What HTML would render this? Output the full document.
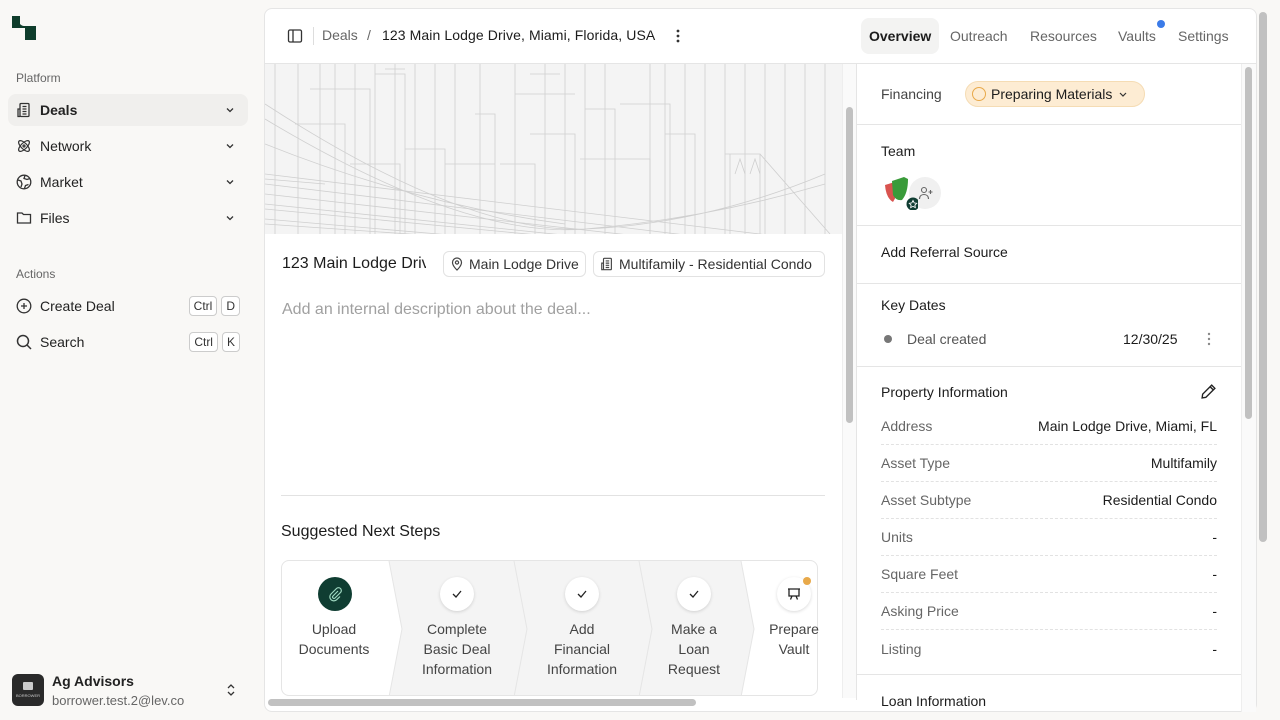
<!DOCTYPE html>
<html><head><meta charset="utf-8"><style>
*{box-sizing:border-box;margin:0;padding:0}
body{width:1280px;height:720px;overflow:hidden;background:#f9f8f6;font-family:"Liberation Sans",sans-serif;color:#1c1c1c;position:relative;font-size:14px}
.a{position:absolute}
.nav{left:8px;width:240px;height:32px;border-radius:8px;display:flex;align-items:center;padding-left:8px;font-size:14px;color:#222}
.nav svg{margin-right:8px}
.chev{position:absolute;right:4px;top:10px}
.sec{left:16px;font-size:12px;color:#666}
.kbd{border:1px solid #ccc;border-radius:4px;font-size:12px;height:20px;line-height:18px;padding:0 4px;background:#fff;color:#333;display:inline-block;margin-left:4px}
.card{left:264px;top:8px;width:993px;height:704px;background:#fff;border:1px solid #e5e5e5;border-radius:8px;overflow:hidden}
.tab{top:18px;height:36px;line-height:36px;font-size:14px;color:#666;padding:0 8px}
.row{left:881px;width:336px;height:37px;border-bottom:1px dashed #e2e2e2;font-size:14px;display:flex;justify-content:space-between;align-items:center}
.row span:first-child{color:#666}
.row span:last-child{color:#1c1c1c}
.hl{left:857px;width:384px;height:1px;background:#e5e5e5}
.st{font-size:14px;color:#444;text-align:center;line-height:20px}
.circ{width:34px;height:34px;border-radius:50%;background:#fff;box-shadow:0 1px 3px rgba(0,0,0,.15);display:flex;align-items:center;justify-content:center}
</style></head><body>
<svg class="a" style="left:12px;top:16px" width="24" height="24" viewBox="0 0 24 24"><path d="M0 0h8v8q2 2 4 2h12v14H13V12H0z" fill="#0f3d2c"/></svg>
<div class="a sec" style="top:71px">Platform</div>
<div class="a nav" style="top:94px;background:#f0efed;font-weight:bold"><svg width="16" height="16" viewBox="0 0 16 16" fill="none" stroke="#333" stroke-width="1.3"><rect x="4" y="1.5" width="9" height="13" rx="1"/><path d="M4 7H2v7.5h2M6.5 4.5h4M6.5 7h4M6.5 9.5h4M6.5 12h4"/></svg>Deals<svg class="chev" width="12" height="12" viewBox="0 0 12 12"><path d="M3 4.5l3 3 3-3" stroke="#333" stroke-width="1.3" fill="none"/></svg></div>
<div class="a nav" style="top:130px"><svg width="16" height="16" viewBox="0 0 16 16" fill="none" stroke="#333" stroke-width="1.2"><ellipse cx="8" cy="8" rx="7" ry="3" transform="rotate(45 8 8)"/><ellipse cx="8" cy="8" rx="7" ry="3" transform="rotate(-45 8 8)"/><circle cx="8" cy="8" r="1"/></svg>Network<svg class="chev" width="12" height="12" viewBox="0 0 12 12"><path d="M3 4.5l3 3 3-3" stroke="#333" stroke-width="1.3" fill="none"/></svg></div>
<div class="a nav" style="top:166px"><svg width="16" height="16" viewBox="0 0 16 16" fill="none" stroke="#333" stroke-width="1.3"><circle cx="8" cy="8" r="6.8"/><path d="M2 6l3 1 1 3-1 3M9 1.5l-1 3 3 1 3-1M8.5 14.5l1-3 3-1"/></svg>Market<svg class="chev" width="12" height="12" viewBox="0 0 12 12"><path d="M3 4.5l3 3 3-3" stroke="#333" stroke-width="1.3" fill="none"/></svg></div>
<div class="a nav" style="top:202px"><svg width="16" height="16" viewBox="0 0 16 16" fill="none" stroke="#333" stroke-width="1.3"><path d="M1.5 3h4.5l1.5 1.5h7v8.5h-13z"/></svg>Files<svg class="chev" width="12" height="12" viewBox="0 0 12 12"><path d="M3 4.5l3 3 3-3" stroke="#333" stroke-width="1.3" fill="none"/></svg></div>
<div class="a sec" style="top:267px">Actions</div>
<div class="a nav" style="top:290px"><svg width="16" height="16" viewBox="0 0 16 16" fill="none" stroke="#333" stroke-width="1.3"><circle cx="8" cy="8" r="6.8"/><path d="M8 5v6M5 8h6"/></svg>Create Deal<div style="position:absolute;right:8px;top:6px;display:flex"><span class="kbd">Ctrl</span><span class="kbd">D</span></div></div>
<div class="a nav" style="top:326px"><svg width="16" height="16" viewBox="0 0 16 16" fill="none" stroke="#333" stroke-width="1.5"><circle cx="7" cy="7" r="5.5"/><path d="M11 11l4 4"/></svg>Search<div style="position:absolute;right:8px;top:6px;display:flex"><span class="kbd">Ctrl</span><span class="kbd">K</span></div></div>
<div class="a" style="left:12px;top:674px;width:32px;height:32px;border-radius:6px;background:#2a2a2a"><div style="margin:8px auto 0;width:10px;height:8px;background:#ccc;border-radius:1px"></div><div style="font-size:4px;color:#ccc;text-align:center;margin-top:3px">BORROWER</div></div>
<div class="a" style="left:52px;top:673px;font-size:14px;font-weight:bold;color:#222">Ag Advisors</div>
<div class="a" style="left:52px;top:693px;font-size:13px;color:#666">borrower.test.2@lev.co</div>
<svg class="a" style="left:225px;top:683px" width="12" height="14" viewBox="0 0 12 14"><path d="M3 5l3-3 3 3M3 9l3 3 3-3" stroke="#333" stroke-width="1.3" fill="none"/></svg>

<div class="a card"></div>
<svg class="a" style="left:287px;top:28px" width="16" height="16" viewBox="0 0 16 16" fill="none" stroke="#333" stroke-width="1.3"><rect x="1.5" y="2" width="13" height="12" rx="1.5"/><path d="M6 2v12"/></svg>
<div class="a" style="left:313px;top:27px;width:1px;height:18px;background:#ddd"></div>
<div class="a" style="left:322px;top:27px;font-size:14px;color:#666">Deals</div>
<div class="a" style="left:367px;top:27px;font-size:14px;color:#666">/</div>
<div class="a" style="left:382px;top:27px;font-size:14px;color:#1c1c1c;letter-spacing:0.1px">123 Main Lodge Drive, Miami, Florida, USA</div>
<svg class="a" style="left:670px;top:28px" width="16" height="16"><circle cx="8" cy="3" r="1.4" fill="#333"/><circle cx="8" cy="8" r="1.4" fill="#333"/><circle cx="8" cy="13" r="1.4" fill="#333"/></svg>
<div class="a tab" style="left:861px;background:#f3f3f2;border-radius:8px;color:#1c1c1c;font-weight:bold">Overview</div>
<div class="a tab" style="left:942px">Outreach</div>
<div class="a tab" style="left:1022px">Resources</div>
<div class="a tab" style="left:1110px">Vaults</div>
<div class="a" style="left:1157px;top:20px;width:8px;height:8px;border-radius:50%;background:#3b7be8"></div>
<div class="a tab" style="left:1170px">Settings</div>
<div class="a" style="left:265px;top:63px;width:991px;height:1px;background:#e5e5e5"></div>

<svg class="a" style="left:265px;top:64px" width="577" height="170" viewBox="0 0 577 170">
<rect width="577" height="170" fill="#f4f4f4"/>
<g stroke="#cfcfcf" stroke-width="0.8" fill="none">
<path d="M10 0v170M33 0v170M55 0v170M90 0v170M110 0v170M130 0v170M150 0v170M190 0v170M215 0v170M250 0v170M300 0v170M340 0v170M385 0v170M400 0v170M420 0v170M440 0v170M460 0v170M500 0v170M520 0v170M540 0v170M560 0v170M70 0v170M170 0v170M280 0v170M320 0v170M480 0v170"/>
<path d="M30 60h50v110M45 25h60v145M85 100h50v70M110 10h30v160M140 85h40v85M180 100h50v70M210 50h20v120M235 100h35v70M265 70h45v100M315 95h70v75M320 45h30v125M355 40h50v130M400 70h30v100M250 30h60M265 10h30M120 5h20"/>
<path d="M0 120l577 70M0 130l577 65M0 140l577 60M0 155l577 50M0 110l577 70M0 145l577 55M0 160l577 40"/>
<path d="M0 40q200 130 320 125T560 110M0 55q200 120 320 110T560 120M0 80q150 60 300 80"/>
<path d="M465 170V90h30v80M460 90h35M470 110l5-15 5 15M485 110l5-15 5 15M495 90l70 80M0 115l60 5"/>
</g></svg>
<div class="a" style="left:842px;top:64px;width:14px;height:634px;background:#fafafa;border-left:1px solid #eee"></div>
<div class="a" style="left:846px;top:107px;width:7px;height:316px;border-radius:4px;background:#c1c1c1"></div>
<div class="a" style="left:856px;top:64px;width:1px;height:636px;background:#e5e5e5"></div>

<div class="a" style="left:282px;top:255px;font-size:16px;width:144px;overflow:hidden;white-space:nowrap;color:#1c1c1c">123 Main Lodge Drive</div>
<div class="a" style="left:443px;top:251px;height:26px;border:1px solid #e2e2e2;border-radius:6px;padding:0 6px 0 6px;display:flex;align-items:center;font-size:14px;color:#333"><svg width="14" height="14" viewBox="0 0 14 14" fill="none" stroke="#444" stroke-width="1.2" style="margin-right:5px"><path d="M7 13s4.5-4 4.5-7.5a4.5 4.5 0 0 0-9 0C2.5 9 7 13 7 13z"/><circle cx="7" cy="5.5" r="1.6"/></svg>Main Lodge Drive</div>
<div class="a" style="left:593px;top:251px;height:26px;width:232px;border:1px solid #e2e2e2;border-radius:6px;padding:0 6px 0 6px;display:flex;align-items:center;font-size:14px;color:#333;white-space:nowrap"><svg width="14" height="14" viewBox="0 0 16 16" fill="none" stroke="#444" stroke-width="1.3" style="margin-right:5px"><rect x="4" y="1.5" width="9" height="13" rx="1"/><path d="M4 7H2v7.5h2M6.5 4.5h4M6.5 7h4M6.5 9.5h4M6.5 12h4"/></svg>Multifamily - Residential Condo</div>
<div class="a" style="left:282px;top:301px;font-size:16px;color:#a0a0a0">Add an internal description about the deal...</div>
<div class="a" style="left:281px;top:495px;width:544px;height:1px;background:#e2e2e2"></div>
<div class="a" style="left:281px;top:523px;font-size:16px;color:#1c1c1c">Suggested Next Steps</div>

<div class="a" style="left:281px;top:560px;width:537px;height:136px;border:1px solid #e5e5e5;border-radius:8px;overflow:hidden;background:#fff">
<svg class="a" style="left:0;top:0" width="560" height="136"><polygon points="107,0 459,0 472,68 459,136 107,136 120,68" fill="#f4f4f4"/><g stroke="#e5e5e5" fill="none"><path d="M107,0L120,68L107,136M232,0L245,68L232,136M357,0L370,68L357,136M459,0L472,68L459,136"/></g></svg>
</div>
<div class="a" style="left:318px;top:577px;width:34px;height:34px;border-radius:50%;background:#0f3d32;display:flex;align-items:center;justify-content:center"><svg width="16" height="16" viewBox="0 0 16 16" fill="none" stroke="#9ed8c0" stroke-width="1.2"><path d="M11 5l-5 5a1.4 1.4 0 0 0 2 2l5.5-5.5a2.8 2.8 0 0 0-4-4L4 8a4 4 0 0 0 5.7 5.7L13 10.5"/></svg></div>
<div class="a circ" style="left:440px;top:577px"><svg width="12" height="12"><path d="M2 6l3 3 5-6" stroke="#222" stroke-width="1.3" fill="none"/></svg></div>
<div class="a circ" style="left:565px;top:577px"><svg width="12" height="12"><path d="M2 6l3 3 5-6" stroke="#222" stroke-width="1.3" fill="none"/></svg></div>
<div class="a circ" style="left:677px;top:577px"><svg width="12" height="12"><path d="M2 6l3 3 5-6" stroke="#222" stroke-width="1.3" fill="none"/></svg></div>
<div class="a circ" style="left:777px;top:577px"><svg width="14" height="14" viewBox="0 0 14 14" fill="none" stroke="#222" stroke-width="1.3"><path d="M1 2h12M2 2v7h10V2M5 9l-1.5 3.5M9 9l1.5 3.5"/></svg></div>
<div class="a" style="left:803px;top:577px;width:8px;height:8px;border-radius:50%;background:#e8a94a"></div>
<div class="a st" style="left:284px;top:619px;width:100px">Upload<br>Documents</div>
<div class="a st" style="left:402px;top:619px;width:110px">Complete<br>Basic Deal<br>Information</div>
<div class="a st" style="left:527px;top:619px;width:110px">Add<br>Financial<br>Information</div>
<div class="a st" style="left:644px;top:619px;width:100px">Make a<br>Loan<br>Request</div>
<div class="a st" style="left:760px;top:619px;width:68px">Prepare<br>Vault</div>
<div class="a" style="left:268px;top:699px;width:428px;height:7px;border-radius:4px;background:#c1c1c1"></div>

<div class="a" style="left:881px;top:86px;font-size:14px;color:#444">Financing</div>
<div class="a" style="left:965px;top:81px;height:26px;width:180px;border-radius:13px;background:#fdecd3;border:1px solid #f5dcb4;padding:0 10px 0 6px;display:flex;align-items:center;font-size:14px;color:#1c1c1c;white-space:nowrap"><span style="width:14px;height:14px;border-radius:50%;border:1.5px solid #e8a94a;margin-right:5px;flex:none"></span>Preparing Materials<svg width="10" height="10" style="margin-left:6px"><path d="M2 4l3 3 3-3" stroke="#333" stroke-width="1.2" fill="none"/></svg></div>
<div class="a hl" style="top:124px"></div>
<div class="a" style="left:881px;top:143px">Team</div>
<div class="a" style="left:909px;top:177px;width:32px;height:32px;border-radius:50%;background:#f0f0f0"><svg width="16" height="16" viewBox="0 0 16 16" style="margin:8px 0 0 9px" fill="none" stroke="#666" stroke-width="1.1"><circle cx="6" cy="5" r="2.5"/><path d="M1.5 14c0-3 2-4.5 4.5-4.5s4.5 1.5 4.5 4.5M12.5 5v4M10.5 7h4"/></svg></div>
<svg class="a" style="left:884px;top:176px" width="34" height="34" viewBox="0 0 34 34"><path d="M1 9l10-3 2 13-4 7q-7-4-8-17z" fill="#d9534f"/><path d="M8 5l12-4 4 2q0 14-6 21-6 1-9-5z" fill="#3a9b3a"/><circle cx="29" cy="28" r="6.5" fill="#0f3d32"/><path d="M29 24.5l1.2 2.4 2.5.4-1.8 1.8.4 2.5-2.3-1.2-2.3 1.2.4-2.5-1.8-1.8 2.5-.4z" fill="none" stroke="#fff" stroke-width="0.9"/></svg>
<div class="a hl" style="top:225px"></div>
<div class="a" style="left:881px;top:244px">Add Referral Source</div>
<div class="a hl" style="top:283px"></div>
<div class="a" style="left:881px;top:297px">Key Dates</div>
<div class="a" style="left:884px;top:335px;width:8px;height:8px;border-radius:50%;background:#777"></div>
<div class="a" style="left:907px;top:331px;color:#555">Deal created</div>
<div class="a" style="left:1123px;top:331px">12/30/25</div>
<svg class="a" style="left:1202px;top:331px" width="14" height="16"><circle cx="7" cy="3" r="1.2" fill="#888"/><circle cx="7" cy="8" r="1.2" fill="#888"/><circle cx="7" cy="13" r="1.2" fill="#888"/></svg>
<div class="a hl" style="top:366px"></div>
<div class="a" style="left:881px;top:384px">Property Information</div>
<svg class="a" style="left:1200px;top:383px" width="17" height="17" viewBox="0 0 16 16" fill="none" stroke="#222" stroke-width="1.3"><path d="M11 2l3 3-8.5 8.5L2 14l.5-3.5z M9.5 3.5l3 3"/></svg>
<div class="a row" style="top:408px"><span>Address</span><span>Main Lodge Drive, Miami, FL</span></div>
<div class="a row" style="top:445px"><span>Asset Type</span><span>Multifamily</span></div>
<div class="a row" style="top:482px"><span>Asset Subtype</span><span>Residential Condo</span></div>
<div class="a row" style="top:519px"><span>Units</span><span>-</span></div>
<div class="a row" style="top:556px"><span>Square Feet</span><span>-</span></div>
<div class="a row" style="top:593px"><span>Asking Price</span><span>-</span></div>
<div class="a row" style="top:630px;border-bottom:none"><span>Listing</span><span>-</span></div>
<div class="a hl" style="top:674px"></div>
<div class="a" style="left:881px;top:693px">Loan Information</div>
<div class="a" style="left:1241px;top:64px;width:15px;height:648px;background:#fafafa;border-left:1px solid #eee"></div>
<div class="a" style="left:1245px;top:67px;width:7px;height:352px;border-radius:4px;background:#c1c1c1"></div>
<div class="a" style="left:1259px;top:12px;width:8px;height:530px;border-radius:4px;background:#c1c1c1"></div>
</body></html>
